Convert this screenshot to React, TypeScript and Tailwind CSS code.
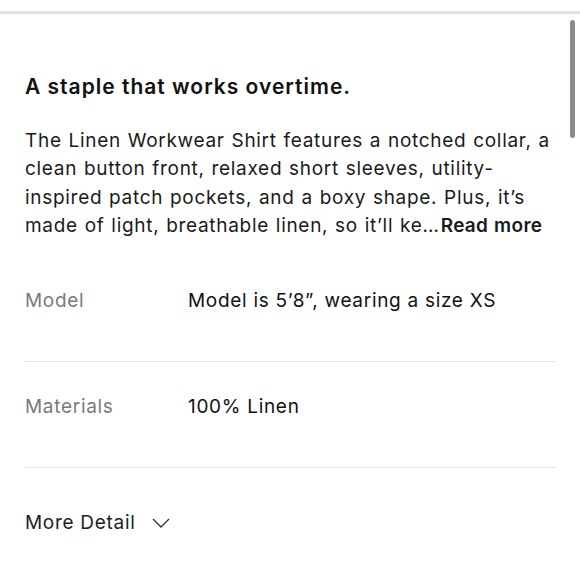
import React from 'react';

const rows = [
  { label: 'Model', value: 'Model is 5\u20198\u201D, wearing a size XS', pt: 'pt-0' },
  { label: 'Materials', value: '100% Linen', pt: 'pt-[31px]' },
];

export default function App() {
  return (
    <div className="relative w-[580px] h-[580px] overflow-hidden bg-white font-['Inter',sans-serif] text-[#111]">
      <div className="h-[11px]" />
      <div className="h-[3px] bg-[#e2e2e2]" />
      <div className="absolute right-[5px] top-[20px] w-[5px] h-[118px] rounded-full bg-[#8a8a8a]" />
      <div className="px-[25px]">
        <h2 className="mt-[59px] text-[21px] leading-[28px] font-semibold tracking-[1px]">
          A staple that works overtime.
        </h2>
        <p className="mt-[26px] w-[534px] text-[19px] leading-[28.3px] tracking-[0.7px] [word-spacing:0.8px] text-[#1a1a1a]">
          The Linen Workwear Shirt features a notched collar, a clean button front, relaxed short sleeves, utility-inspired patch pockets, and a boxy shape. Plus, it’s made of light, breathable linen, so it’ll ke…<span className="ml-px font-semibold tracking-[0.3px]">Read more</span>
        </p>
        <div className="mt-[47px] w-[531px]">
          {rows.map((r) => (
            <div key={r.label} className={`flex border-b border-[#e3e3e3] pb-[46px] ${r.pt}`}>
              <div className="w-[163px] text-[19px] leading-[28px] tracking-[0.7px] text-[#7a7a7a]">{r.label}</div>
              <div className="text-[19px] leading-[28px] tracking-[0.7px] text-[#111]">{r.value}</div>
            </div>
          ))}
          <div className="flex items-center gap-[17px] pt-[41px] text-[19px] leading-[28px] tracking-[0.7px] text-[#222]">
            <span>More Detail</span>
            <svg width="18" height="10" viewBox="0 0 18 10" fill="none" stroke="#333" strokeWidth="1.3">
              <path d="M1 1l8 8 8-8" />
            </svg>
          </div>
        </div>
      </div>
    </div>
  );
}
